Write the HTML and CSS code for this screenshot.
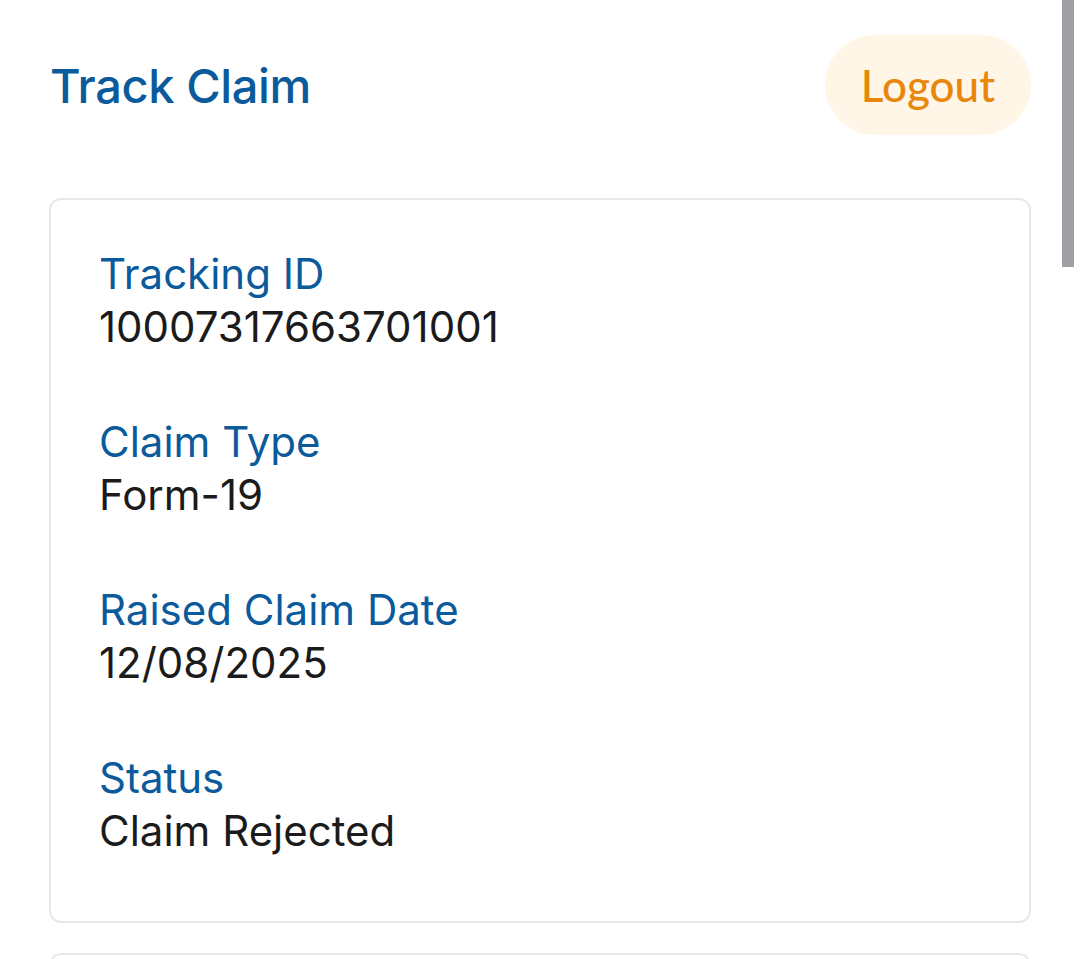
FILE: index.html
```html
<!DOCTYPE html>
<html>
<head>
<meta charset="utf-8">
<link rel="stylesheet" href="styles.css">
</head>
<body>
<div class="page">
  <header class="header">
    <h1 class="title">Track Claim</h1>
    <button class="logout">Logout</button>
  </header>
  <section class="card">
    <div class="field">
      <div class="label">Tracking ID</div>
      <div class="value">10007317663701001</div>
    </div>
    <div class="field">
      <div class="label">Claim Type</div>
      <div class="value">Form-19</div>
    </div>
    <div class="field">
      <div class="label">Raised Claim Date</div>
      <div class="value">12/08/2025</div>
    </div>
    <div class="field">
      <div class="label">Status</div>
      <div class="value">Claim Rejected</div>
    </div>
  </section>
  <section class="card next"></section>
</div>
<div class="scrollbar"></div>
</body>
</html>
```
FILE: styles.css
```css
html, body {
  margin: 0;
  padding: 0;
  background: #ffffff;
  overflow: hidden;
}
body {
  font-family: Inter, "DejaVu Sans", sans-serif;
}
.page {
  padding: 35px 49px 0 49px;
  display: flex;
  flex-direction: column;
}
.header {
  display: flex;
  justify-content: space-between;
  align-items: center;
  height: 100px;
}
.title {
  margin: 0 0 0 1px;
  font-size: 47px;
  font-weight: 500;
  color: #0b5a9b;
  letter-spacing: -0.4px;
}
.logout {
  width: 206px;
  height: 100px;
  border: none;
  border-radius: 50px;
  background: #fff6e8;
  color: #e8870c;
  font-family: Lato, sans-serif;
  font-size: 44px;
  font-weight: 500;
  padding: 0;
}
.card {
  margin-top: 63px;
  border: 2px solid #e8e8e8;
  border-radius: 12px;
  padding: 47px 48px 64px 48px;
  display: flex;
  flex-direction: column;
  gap: 62px;
}
.card.next {
  margin-top: 30px;
  height: 200px;
  padding: 0;
}
.field {
  display: flex;
  flex-direction: column;
}
.label {
  font-size: 42px;
  color: #0b5a9b;
  line-height: 53px;
}
.value {
  font-size: 42px;
  color: #1b1b1b;
  line-height: 53px;
}
.scrollbar {
  position: fixed;
  top: 0;
  right: 6px;
  width: 12px;
  height: 267px;
  background: #a09fa3;
}
```
